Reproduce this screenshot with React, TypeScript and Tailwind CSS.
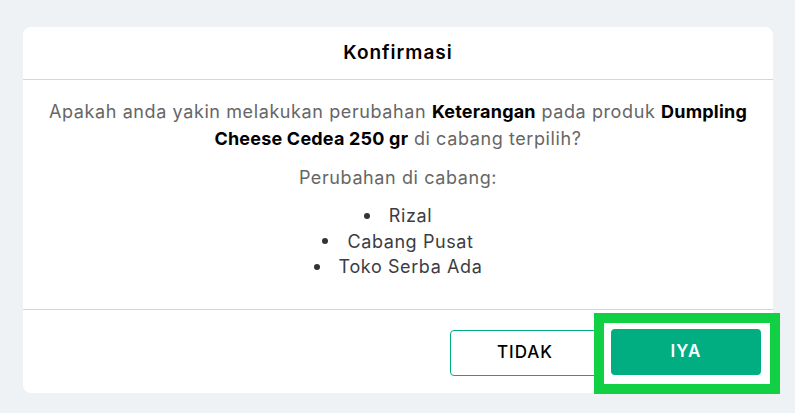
import React from "react";

export default function App() {
  return (
    <div
      className="w-[795px] h-[413px] bg-[#eef2f5] pt-[27px] pl-[23px]"
      style={{ fontFamily: "Inter, 'Noto Sans', sans-serif" }}
    >
      <div className="relative w-[750px] h-[366px] bg-white rounded-[8px] flex flex-col">
        <div className="h-[53px] flex items-center justify-center border-b border-[#d6d6d6] text-[19px] tracking-[1px] font-semibold text-black">
          Konfirmasi
        </div>
        <div className="h-[230px] border-b border-[#d6d6d6] flex flex-col items-center pt-[18px] tracking-[0.6px]">
          <p className="text-[18px] leading-[27px] text-[#666] text-center whitespace-nowrap">
            Apakah anda yakin melakukan perubahan{" "}
            <b className="text-black font-bold tracking-[0.2px]">Keterangan</b> pada produk{" "}
            <b className="text-black font-bold tracking-[0.2px]">Dumpling</b>
            <br />
            <b className="text-black font-bold tracking-[0.2px]">Cheese Cedea 250 gr</b> di cabang terpilih?
          </p>
          <p className="mt-[12px] text-[18px] leading-[27px] text-[#666] text-center">Perubahan di cabang:</p>
          <ul className="mt-[12px] text-[18px] leading-[25.5px] text-[#3c3c44] flex flex-col items-center">
            {["Rizal", "Cabang Pusat", "Toko Serba Ada"].map((t) => (
              <li key={t} className="flex items-center">
                <span className="w-[6px] h-[6px] rounded-full bg-[#333] mr-[19px]" />
                {t}
              </li>
            ))}
          </ul>
        </div>
        <div className="flex-1 flex items-center justify-end pr-[12px] gap-[11px]">
          <button className="w-[150px] h-[46px] mt-[3px] rounded-[4px] border border-[#00ae82] bg-white text-[17px] tracking-[1px] font-medium text-black">
            TIDAK
          </button>
          <div className="relative">
            <button className="w-[150px] h-[46px] rounded-[4px] bg-[#00ae82] text-[17px] tracking-[1px] font-semibold text-white">
              IYA
            </button>
            <div className="absolute left-[-17px] top-[-16px] w-[186px] h-[81px] border-[10px] border-[#12d044] pointer-events-none" />
          </div>
        </div>
      </div>
    </div>
  );
}
